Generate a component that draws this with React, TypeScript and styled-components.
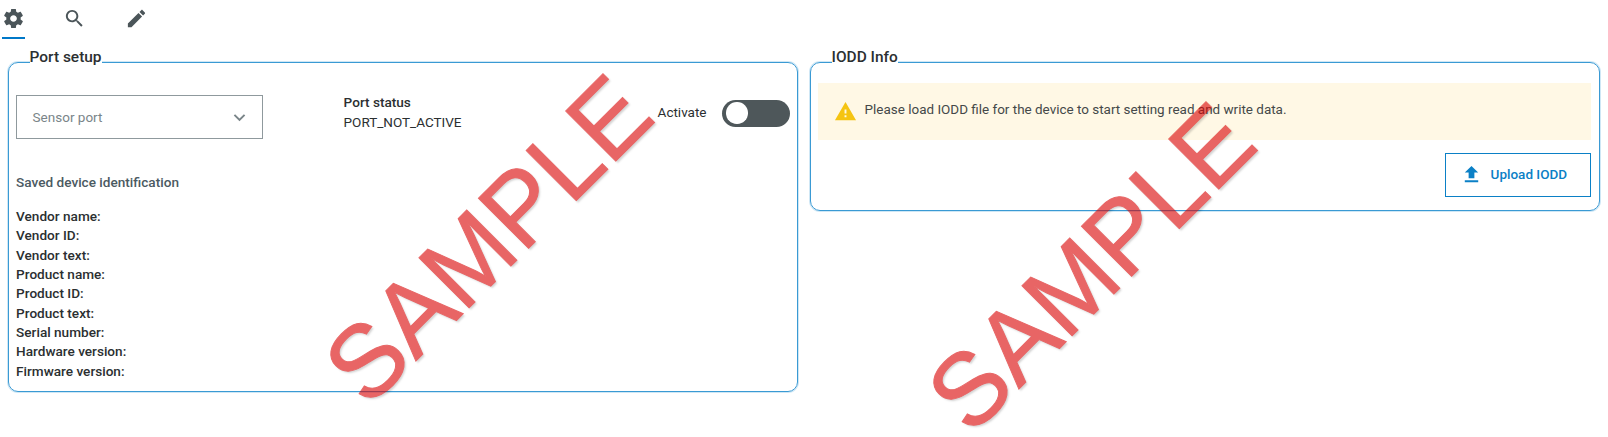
import React from "react";
import styled, { createGlobalStyle } from "styled-components";

const GlobalStyle = createGlobalStyle`
  * { box-sizing: border-box; }
  body {
    margin: 0;
    background: #fff;
    color: #2b2f31;
    font-family: Roboto, "Liberation Sans", sans-serif;
    font-size: 13.5px;
    line-height: 19.3px;
    overflow: hidden;
  }
`;

const Page = styled.main`
  position: relative;
  width: 1608px;
  height: 437px;
  overflow: hidden;
`;

const Tabs = styled.nav`
  display: flex;
  gap: 38.3px;
  padding-left: 2px;
  height: 39px;
`;

const Tab = styled.button<{ $active?: boolean }>`
  display: flex;
  justify-content: center;
  width: 23px;
  height: 39px;
  padding: 6.5px 0 0;
  border: 0;
  border-bottom: 2px solid ${(p) => (p.$active ? "#0078c8" : "transparent")};
  background: none;
  color: #4b5559;
`;

const Icon = styled.svg<{ $size: number }>`
  display: block;
  flex: none;
  width: ${(p) => p.$size}px;
  height: ${(p) => p.$size}px;
  fill: currentColor;
`;

const Panels = styled.div`
  display: grid;
  grid-template-columns: 790px 790px;
  gap: 12px;
  align-items: start;
  padding: 23px 0 0 7.6px;
`;

const Panel = styled.section<{ $height: number }>`
  height: ${(p) => p.$height}px;
  padding: 0 7.5px;
  border: 1px solid #3a9ad4;
  border-radius: 10px;
  box-shadow: 0 0 0 1px rgba(63, 159, 214, 0.25);
`;

const PanelTitle = styled.h2`
  width: max-content;
  height: 20px;
  margin: -15px 0 0 13.5px;
  background: #fff;
  font-size: 15.45px;
  font-weight: 500;
  line-height: 18px;
`;

const SetupRow = styled.div`
  display: flex;
  align-items: flex-start;
  margin-top: 27px;
`;

const Select = styled.div`
  display: flex;
  flex: none;
  align-items: center;
  justify-content: space-between;
  width: 247.2px;
  height: 44px;
  padding: 1px 11px 0 15.5px;
  border: 1px solid #8f999d;
  color: #7a8589;
`;

const Status = styled.div`
  flex: none;
  width: 314px;
  margin: -1.7px 0 0 80.3px;
`;

const Strong = styled.div`
  font-size: 13.6px;
  font-weight: 500;
`;

const ToggleLabel = styled.label`
  display: flex;
  flex: none;
  align-items: center;
  justify-content: space-between;
  width: 132.5px;
  height: 27px;
  margin-top: 4.5px;
`;

const Toggle = styled.span`
  display: flex;
  align-items: center;
  width: 68px;
  height: 27px;
  padding-left: 4px;
  border-radius: 14px;
  background: #4e575a;
`;

const Knob = styled.span`
  width: 21.5px;
  height: 21.5px;
  border-radius: 50%;
  background: #fff;
`;

const Subtitle = styled.h3`
  margin: 34px 0 14.9px;
  color: #4b5a62;
  font-size: 13.6px;
  font-weight: 500;
  line-height: 19.3px;
`;

const Alert = styled.div`
  display: flex;
  height: 57px;
  margin: 15px 0 0;
  padding: 16.5px 15.5px;
  background: #fff8e5;
  color: #444849;
`;

const AlertIcon = styled(Icon)`
  color: #f5c412;
`;

const AlertText = styled.span`
  margin-left: 8px;
  font-size: 13.46px;
`;

const Actions = styled.div`
  display: flex;
  justify-content: flex-end;
  margin-top: 13px;
`;

const UploadButton = styled.button`
  display: flex;
  align-items: center;
  gap: 7.5px;
  width: 146.5px;
  height: 44px;
  padding: 0 0 1px 14.5px;
  border: 1px solid #0b80c6;
  background: #fff;
  color: #0b80c6;
  font: 500 13.5px/19px Roboto, sans-serif;
`;

/* Diagonal stamp laid over the page; $x/$y is the start of its baseline. */
const Watermark = styled.span<{ $x: number; $y: number }>`
  position: absolute;
  left: ${(p) => p.$x}px;
  top: ${(p) => p.$y - 70}px;
  font: 101px/70px "Liberation Sans", Arial, sans-serif;
  color: #d90000;
  -webkit-text-stroke: 1px #d90000;
  opacity: 0.6;
  text-shadow: 0 2.5px 2px rgba(0, 0, 0, 0.28);
  transform: rotate(-45deg) scaleY(1.02);
  transform-origin: 0 70px;
  white-space: nowrap;
  pointer-events: none;
`;

const GEAR =
  "M19.43 12.98c.04-.32.07-.64.07-.98s-.03-.66-.07-.98l2.11-1.65c.19-.15.24-.42.12-.64l-2-3.46c-.12-.22-.39-.3-.61-.22l-2.49 1c-.52-.4-1.08-.73-1.69-.98l-.38-2.65C14.46 2.18 14.25 2 14 2h-4c-.25 0-.46.18-.49.42l-.38 2.65c-.61.25-1.17.59-1.69.98l-2.49-1c-.23-.09-.49 0-.61.22l-2 3.46c-.13.22-.07.49.12.64l2.11 1.65c-.04.32-.07.65-.07.98s.03.66.07.98l-2.11 1.65c-.19.15-.24.42-.12.64l2 3.46c.12.22.39.3.61.22l2.49-1c.52.4 1.08.73 1.69.98l.38 2.65c.03.24.24.42.49.42h4c.25 0 .46-.18.49-.42l.38-2.65c.61-.25 1.17-.59 1.69-.98l2.49 1c.23.09.49 0 .61-.22l2-3.46c.12-.22.07-.49-.12-.64l-2.11-1.65zM12 15.5c-1.93 0-3.5-1.57-3.5-3.5s1.57-3.5 3.5-3.5 3.5 1.57 3.5 3.5-1.57 3.5-3.5 3.5z";
const SEARCH =
  "M15.5 14h-.79l-.28-.27C15.41 12.59 16 11.11 16 9.5 16 5.91 13.09 3 9.5 3S3 5.91 3 9.5 5.91 16 9.5 16c1.61 0 3.09-.59 4.23-1.57l.27.28v.79l5 4.99L20.49 19l-4.99-5zm-6 0C7.01 14 5 11.99 5 9.5S7.01 5 9.5 5 14 7.01 14 9.5 11.99 14 9.5 14z";
const EDIT =
  "M3 17.25V21h3.75L17.81 9.94l-3.75-3.75L3 17.25zM20.71 7.04c.39-.39.39-1.02 0-1.41l-2.34-2.34c-.39-.39-1.02-.39-1.41 0l-1.83 1.83 3.75 3.75 1.83-1.83z";
const CHEVRON = "M7.41 8.59 12 13.17l4.59-4.58L18 10l-6 6-6-6z";
const WARNING = "M1 21h22L12 2 1 21zm12-3h-2v-2h2v2zm0-4h-2v-4h2v4z";
const UPLOAD = "M9 16h6v-6h4l-7-7-7 7h4zm-4 2h14v2H5z";

const FIELDS = [
  "Vendor name:",
  "Vendor ID:",
  "Vendor text:",
  "Product name:",
  "Product ID:",
  "Product text:",
  "Serial number:",
  "Hardware version:",
  "Firmware version:",
];

export default function App() {
  return (
    <Page>
      <GlobalStyle />
      <Tabs>
        <Tab $active aria-label="Settings">
          <Icon $size={23} viewBox="0 0 24 24"><path d={GEAR} /></Icon>
        </Tab>
        <Tab aria-label="Search">
          <Icon $size={23} viewBox="0 0 24 24"><path d={SEARCH} /></Icon>
        </Tab>
        <Tab aria-label="Edit">
          <Icon $size={23} viewBox="0 0 24 24"><path d={EDIT} /></Icon>
        </Tab>
      </Tabs>
      <Panels>
        <Panel $height={330}>
          <PanelTitle>Port setup</PanelTitle>
          <SetupRow>
            <Select>
              Sensor port
              <Icon $size={23} viewBox="0 0 24 24"><path d={CHEVRON} /></Icon>
            </Select>
            <Status>
              <Strong>Port status</Strong>
              PORT_NOT_ACTIVE
            </Status>
            <ToggleLabel>
              Activate
              <Toggle><Knob /></Toggle>
            </ToggleLabel>
          </SetupRow>
          <Subtitle>Saved device identification</Subtitle>
          {FIELDS.map((name) => (
            <Strong key={name}>{name}</Strong>
          ))}
        </Panel>
        <Panel $height={148.5}>
          <PanelTitle>IODD Info</PanelTitle>
          <Alert>
            <AlertIcon $size={23} viewBox="0 0 24 24"><path d={WARNING} /></AlertIcon>
            <AlertText>Please load IODD file for the device to start setting read and write data.</AlertText>
          </Alert>
          <Actions>
            <UploadButton>
              <Icon $size={23} viewBox="0 0 24 24"><path d={UPLOAD} /></Icon>
              Upload IODD
            </UploadButton>
          </Actions>
        </Panel>
      </Panels>
      <Watermark $x={367.7} $y={409.4}>SAMPLE</Watermark>
      <Watermark $x={970.7} $y={437.3}>SAMPLE</Watermark>
    </Page>
  );
}
